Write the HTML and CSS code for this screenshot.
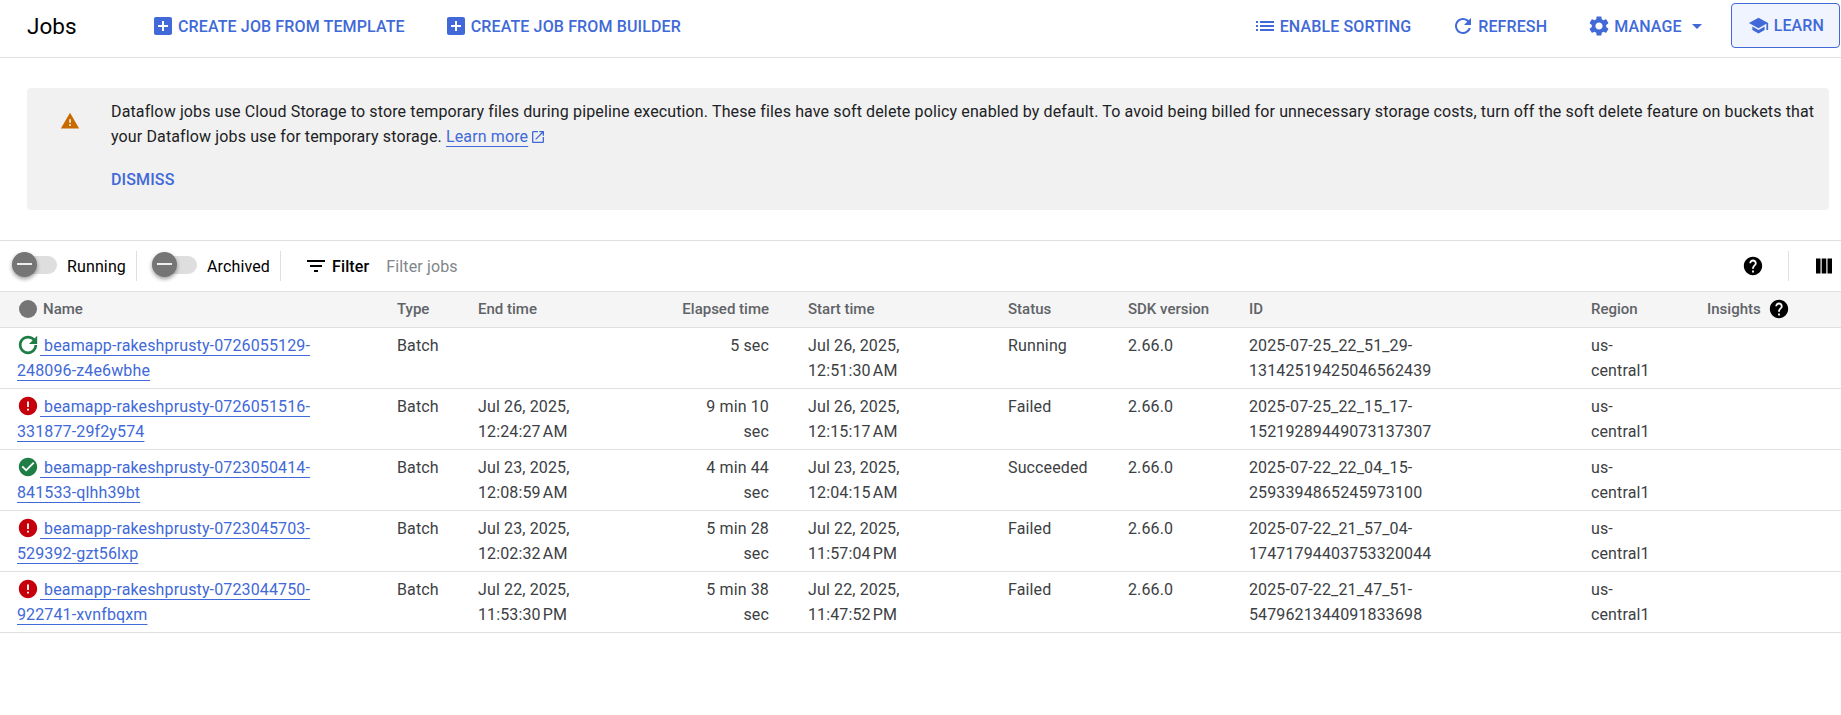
FILE: index.html
```html
<!DOCTYPE html>
<html lang="en">
  <head>
    <meta charset="UTF-8" />
    <title>Jobs</title>
    <link rel="stylesheet" href="styles.css">
  </head>
  <body>
    <svg class="sprite" xmlns="http://www.w3.org/2000/svg">
      <symbol id="i-add" viewBox="0 0 24 24"><path d="M19 3H5c-1.11 0-2 .9-2 2v14c0 1.1.89 2 2 2h14c1.1 0 2-.9 2-2V5c0-1.1-.9-2-2-2zm-2 10h-4v4h-2v-4H7v-2h4V7h2v4h4v2z"/></symbol>
      <symbol id="i-list" viewBox="0 0 24 24"><path d="M3 13h2v-2H3v2zm0 4h2v-2H3v2zm0-8h2V7H3v2zm4 4h14v-2H7v2zm0 4h14v-2H7v2zM7 7v2h14V7H7z"/></symbol>
      <symbol id="i-refresh" viewBox="0 0 24 24"><path d="M17.65 6.35C16.2 4.9 14.21 4 12 4c-4.42 0-7.99 3.58-7.99 8s3.57 8 7.99 8c3.73 0 6.84-2.55 7.73-6h-2.08c-.82 2.33-3.04 4-5.65 4-3.31 0-6-2.69-6-6s2.69-6 6-6c1.66 0 3.14.69 4.22 1.78L13 11h7V4l-2.35 2.35z"/></symbol>
      <symbol id="i-gear" viewBox="0 0 24 24"><path d="M19.14 12.94c.04-.3.06-.61.06-.94 0-.32-.02-.64-.07-.94l2.03-1.58c.18-.14.23-.41.12-.61l-1.92-3.32c-.12-.22-.37-.29-.59-.22l-2.39.96c-.5-.38-1.03-.7-1.62-.94l-.36-2.54c-.04-.24-.24-.41-.48-.41h-3.84c-.24 0-.43.17-.47.41l-.36 2.54c-.59.24-1.13.57-1.62.94l-2.39-.96c-.22-.08-.47 0-.59.22L2.74 8.87c-.12.21-.08.47.12.61l2.03 1.58c-.05.3-.09.63-.09.94s.02.64.07.94l-2.03 1.58c-.18.14-.23.41-.12.61l1.92 3.32c.12.22.37.29.59.22l2.39-.96c.5.38 1.03.7 1.62.94l.36 2.54c.05.24.24.41.48.41h3.84c.24 0 .44-.17.47-.41l.36-2.54c.59-.24 1.13-.56 1.62-.94l2.39.96c.22.08.47 0 .59-.22l1.92-3.32c.12-.22.07-.47-.12-.61l-2.01-1.58zM12 15.6c-1.98 0-3.6-1.62-3.6-3.6s1.62-3.6 3.6-3.6 3.6 1.62 3.6 3.6-1.62 3.6-3.6 3.6z"/></symbol>
      <symbol id="i-school" viewBox="0 0 24 24"><path d="M5 13.18v4L12 21l7-3.82v-4L12 17l-7-3.82zM12 3L1 9l11 6 9-4.91V17h2V9L12 3z"/></symbol>
      <symbol id="i-warning" viewBox="0 0 24 24"><path d="M1 21h22L12 2 1 21zm12-3h-2v-2h2v2zm0-4h-2v-4h2v4z"/></symbol>
      <symbol id="i-open" viewBox="0 0 24 24"><path d="M19 19H5V5h7V3H5c-1.11 0-2 .9-2 2v14c0 1.1.89 2 2 2h14c1.1 0 2-.9 2-2v-7h-2v7zM14 3v2h3.59l-9.83 9.83 1.41 1.41L19 6.41V10h2V3h-7z"/></symbol>
      <symbol id="i-filter" viewBox="0 0 24 24"><path d="M10 18h4v-2h-4v2zM3 6v2h18V6H3zm3 7h12v-2H6v2z"/></symbol>
      <symbol id="i-help" viewBox="0 0 24 24"><path d="M12 2C6.48 2 2 6.48 2 12s4.48 10 10 10 10-4.48 10-10S17.52 2 12 2zm1 17h-2v-2h2v2zm2.07-7.75l-.9.92C13.45 12.9 13 13.5 13 15h-2v-.5c0-1.1.45-2.1 1.17-2.83l1.24-1.26c.37-.36.59-.86.59-1.41 0-1.1-.9-2-2-2s-2 .9-2 2H8c0-2.21 1.79-4 4-4s4 1.79 4 4c0 .88-.36 1.68-.93 2.25z"/></symbol>
      <symbol id="i-columns" viewBox="0 0 16 16"><path d="M0 .5h4.500v15H0zM5.700 .5h4.600v15H5.700zM11.500 .5H16v15h-4.500z"/></symbol>
      <symbol id="i-check" viewBox="0 0 24 24"><path d="M12 2C6.48 2 2 6.48 2 12s4.48 10 10 10 10-4.48 10-10S17.52 2 12 2zm-2 15l-5-5 1.41-1.41L10 14.17l7.59-7.59L19 8l-9 9z"/></symbol>
      <symbol id="i-error" viewBox="0 0 24 24"><path d="M12 2C6.48 2 2 6.48 2 12s4.48 10 10 10 10-4.48 10-10S17.52 2 12 2zm1 15h-2v-2h2v2zm0-4h-2V7h2v6z"/></symbol>
      <symbol id="i-running" viewBox="0 0 24 24"><path d="M19.100 4.900C17.300 3.100 14.800 2 12 2 6.500 2 2 6.500 2 12s4.500 10 10 10 10-4.500 10-10h-3c0 3.900-3.100 7-7 7s-7-3.100-7-7 3.100-7 7-7c1.900 0 3.700.8 5 2.100L13 11h9V2z"/></symbol>
    </svg>

    <header class="topbar">
      <h1 class="page-title">Jobs</h1>
      <a class="action"><svg class="icon"><use href="#i-add"/></svg>CREATE JOB FROM TEMPLATE</a>
      <a class="action action-builder"><svg class="icon"><use href="#i-add"/></svg>CREATE JOB FROM BUILDER</a>
      <div class="topbar-right">
        <a class="action"><svg class="icon"><use href="#i-list"/></svg>ENABLE SORTING</a>
        <a class="action"><svg class="icon"><use href="#i-refresh"/></svg>REFRESH</a>
        <a class="action"><svg class="icon"><use href="#i-gear"/></svg>MANAGE<span class="caret"></span></a>
        <a class="action learn"><svg class="icon learn-icon"><use href="#i-school"/></svg>LEARN</a>
      </div>
    </header>

    <section class="banner">
      <svg class="icon banner-icon"><use href="#i-warning"/></svg>
      <div class="banner-body">
        <p class="banner-text">Dataflow jobs use Cloud Storage to store temporary files during pipeline execution. These files have soft delete policy enabled by default. To avoid being billed for unnecessary storage costs, turn off the soft delete feature on buckets that your Dataflow jobs use for temporary storage. <a class="link">Learn more</a><svg class="icon open-icon"><use href="#i-open"/></svg></p>
        <a class="dismiss">DISMISS</a>
      </div>
    </section>

    <div class="toolbar">
      <label class="toggle"><span class="track"><span class="knob"></span></span>Running</label>
      <span class="sep"></span>
      <label class="toggle"><span class="track"><span class="knob"></span></span>Archived</label>
      <span class="sep"></span>
      <svg class="icon filter-icon"><use href="#i-filter"/></svg>
      <span class="filter-label">Filter</span>
      <span class="filter-input">Filter jobs</span>
      <svg class="icon help-icon"><use href="#i-help"/></svg>
      <span class="sep sep-right"></span>
      <svg class="icon columns-icon"><use href="#i-columns"/></svg>
    </div>

    <table class="jobs">
      <colgroup>
        <col style="width:381px"><col style="width:81px"><col style="width:204px"><col style="width:126px"><col style="width:200px"><col style="width:120px"><col style="width:121px"><col style="width:342px"><col style="width:116px"><col>
      </colgroup>
      <thead>
        <tr>
          <th class="name-head"><span class="dot"></span>Name</th>
          <th>Type</th>
          <th>End time</th>
          <th class="num">Elapsed time</th>
          <th>Start time</th>
          <th>Status</th>
          <th>SDK version</th>
          <th>ID</th>
          <th>Region</th>
          <th class="insights-head">Insights<svg class="icon insights-help"><use href="#i-help"/></svg></th>
        </tr>
      </thead>
      <tbody>
        <tr>
          <td class="name"><svg class="icon state running"><use href="#i-running"/></svg><a class="link"> beamapp-rakeshprusty-0726055129-<br>248096-z4e6wbhe</a></td>
          <td>Batch</td>
          <td></td>
          <td class="num">5 sec</td>
          <td>Jul 26, 2025,<br>12:51:30&#8239;AM</td>
          <td>Running</td>
          <td>2.66.0</td>
          <td>2025-07-25_22_51_29-<br>13142519425046562439</td>
          <td>us-<br>central1</td>
          <td></td>
        </tr>
        <tr>
          <td class="name"><svg class="icon state failed"><use href="#i-error"/></svg><a class="link"> beamapp-rakeshprusty-0726051516-<br>331877-29f2y574</a></td>
          <td>Batch</td>
          <td>Jul 26, 2025,<br>12:24:27&#8239;AM</td>
          <td class="num">9 min 10<br>sec</td>
          <td>Jul 26, 2025,<br>12:15:17&#8239;AM</td>
          <td>Failed</td>
          <td>2.66.0</td>
          <td>2025-07-25_22_15_17-<br>15219289449073137307</td>
          <td>us-<br>central1</td>
          <td></td>
        </tr>
        <tr>
          <td class="name"><svg class="icon state done"><use href="#i-check"/></svg><a class="link"> beamapp-rakeshprusty-0723050414-<br>841533-qlhh39bt</a></td>
          <td>Batch</td>
          <td>Jul 23, 2025,<br>12:08:59&#8239;AM</td>
          <td class="num">4 min 44<br>sec</td>
          <td>Jul 23, 2025,<br>12:04:15&#8239;AM</td>
          <td>Succeeded</td>
          <td>2.66.0</td>
          <td>2025-07-22_22_04_15-<br>2593394865245973100</td>
          <td>us-<br>central1</td>
          <td></td>
        </tr>
        <tr>
          <td class="name"><svg class="icon state failed"><use href="#i-error"/></svg><a class="link"> beamapp-rakeshprusty-0723045703-<br>529392-gzt56lxp</a></td>
          <td>Batch</td>
          <td>Jul 23, 2025,<br>12:02:32&#8239;AM</td>
          <td class="num">5 min 28<br>sec</td>
          <td>Jul 22, 2025,<br>11:57:04&#8239;PM</td>
          <td>Failed</td>
          <td>2.66.0</td>
          <td>2025-07-22_21_57_04-<br>17471794403753320044</td>
          <td>us-<br>central1</td>
          <td></td>
        </tr>
        <tr>
          <td class="name"><svg class="icon state failed"><use href="#i-error"/></svg><a class="link"> beamapp-rakeshprusty-0723044750-<br>922741-xvnfbqxm</a></td>
          <td>Batch</td>
          <td>Jul 22, 2025,<br>11:53:30&#8239;PM</td>
          <td class="num">5 min 38<br>sec</td>
          <td>Jul 22, 2025,<br>11:47:52&#8239;PM</td>
          <td>Failed</td>
          <td>2.66.0</td>
          <td>2025-07-22_21_47_51-<br>5479621344091833698</td>
          <td>us-<br>central1</td>
          <td></td>
        </tr>
      </tbody>
    </table>
  </body>
</html>
```

FILE: styles.css
```css
body {
  margin: 0;
  background: #fff;
  color: #202124;
  font-family: Roboto, "Liberation Sans", sans-serif;
  font-size: 16px;
  letter-spacing: 0.13px;
  overflow: hidden;
}

.sprite {
  display: none;
}

.icon {
  width: 24px;
  height: 24px;
  fill: currentColor;
  flex: none;
}

/* Top bar */
.topbar {
  display: flex;
  align-items: center;
  height: 57px;
  padding-left: 27px;
  border-bottom: 1px solid #e0e0e0;
}

.page-title {
  width: 124px;
  margin: 0 0 5px 0;
  font-size: 22.5px;
  font-weight: 400;
  letter-spacing: 0;
  color: #000;
}

.action {
  display: flex;
  align-items: center;
  gap: 3px;
  margin-bottom: 5px;
  color: #4169d8;
  font-weight: 500;
  white-space: nowrap;
}

.action-builder {
  margin-left: 39px;
}

.topbar-right {
  display: flex;
  align-items: center;
  gap: 40px;
  margin-left: auto;
  padding-right: 1px;
}

.caret {
  width: 0;
  height: 0;
  margin-left: 7px;
  border-left: 5px solid transparent;
  border-right: 5px solid transparent;
  border-top: 5px solid #4169d8;
}

.learn {
  height: 45px;
  padding: 0 15px 0 16px;
  margin-left: -11px;
  margin-bottom: 6px;
  gap: 5px;
  box-sizing: border-box;
  background: #f0f4fe;
  border: 1px solid #4169d8;
  border-radius: 4px;
}

.learn-icon {
  width: 21px;
  height: 21px;
}

/* Warning banner */
.banner {
  display: flex;
  height: 122px;
  margin: 30px 12px 30px 27px;
  background: #f1f1f1;
  border-radius: 4px;
  box-sizing: border-box;
  padding: 11px 8px 0 33px;
}

.banner-icon {
  width: 20px;
  height: 20px;
  margin: 12px 31px 0 0;
  color: #c96a00;
}

.banner-text {
  margin: 0 0 21px 0;
  line-height: 25px;
  color: #202124;
}

.link {
  color: #4169d8;
  text-decoration: underline;
  text-underline-offset: 4px;
  text-decoration-thickness: 1px;
}

.open-icon {
  width: 16px;
  height: 16px;
  margin-left: 2px;
  vertical-align: -3px;
  color: #4169d8;
}

.dismiss {
  color: #4169d8;
  font-weight: 500;
}

/* Toolbar */
.toolbar {
  display: flex;
  align-items: center;
  height: 50px;
  border-top: 1px solid #e0e0e0;
  padding-left: 12px;
  color: #000;
}

.toggle {
  display: flex;
  align-items: center;
  gap: 10px;
}

.track {
  position: relative;
  display: block;
  width: 45px;
  height: 18px;
  margin-bottom: 2px;
  background: #dedede;
  border-radius: 9px;
}

.knob {
  position: absolute;
  left: 0;
  top: -4px;
  width: 25px;
  height: 25px;
  background: #757575;
  border-radius: 50%;
  box-shadow: 0 2px 4px rgba(0, 0, 0, 0.4);
}

.knob::after {
  content: "";
  position: absolute;
  left: 5px;
  top: 11px;
  width: 15px;
  height: 2px;
  background: #eee;
}

.sep {
  width: 1px;
  height: 30px;
  margin: 0 15px 0 10px;
  background: #e0e0e0;
}

.filter-icon {
  margin-left: 8px;
}

.filter-label {
  margin-left: 4px;
  font-weight: 500;
}

.filter-input {
  margin-left: 17px;
  color: #80868b;
}

.help-icon {
  width: 22px;
  height: 22px;
  margin-left: auto;
}

.sep-right {
  margin: 0 27px 0 24px;
}

.columns-icon {
  width: 16px;
  height: 16px;
  margin-right: 9px;
}

/* Jobs table */
.jobs {
  width: 100%;
  table-layout: fixed;
  border-collapse: collapse;
}

.jobs th {
  height: 36px;
  padding: 0 16px 1px;
  box-sizing: border-box;
  background: #f5f5f5;
  color: #5f6368;
  font-size: 15px;
  font-weight: 500;
  letter-spacing: 0;
  text-align: left;
  border-top: 1px solid #e0e0e0;
  border-bottom: 1px solid #e0e0e0;
  white-space: nowrap;
}

.jobs td {
  padding: 5px 16px;
  line-height: 25px;
  color: #3c4043;
  vertical-align: top;
  border-bottom: 1px solid #e0e0e0;
  white-space: nowrap;
}

.jobs th.num,
.jobs td.num {
  text-align: right;
  padding-right: 23px;
}

.jobs th.name-head {
  padding-left: 19px;
}

.dot {
  display: inline-block;
  width: 18px;
  height: 18px;
  margin-right: 6px;
  background: #757575;
  border-radius: 50%;
  vertical-align: -4px;
}

.insights-help {
  width: 22px;
  height: 22px;
  margin-left: 7px;
  color: #000;
  vertical-align: -6px;
}

.jobs td.name {
  padding-left: 17px;
  white-space: pre-wrap;
}

.state {
  width: 22px;
  height: 22px;
  margin-right: 1px;
  vertical-align: -5px;
}

.running,
.done {
  color: #1e7e45;
}

.failed {
  color: #c5000b;
}
```
